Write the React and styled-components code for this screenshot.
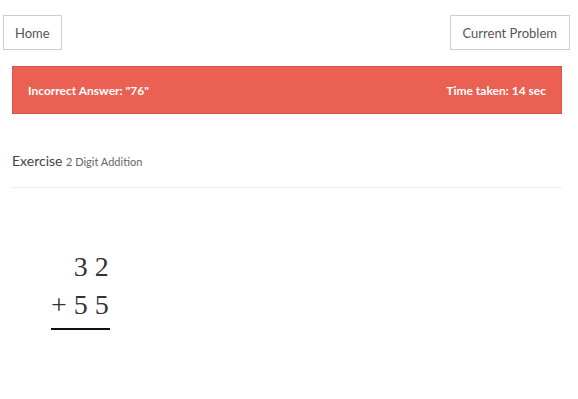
import React from "react";
import styled, { createGlobalStyle } from "styled-components";

const GlobalStyle = createGlobalStyle`
  body {
    margin: 0;
    background: #fff;
    font-family: Lato, "Open Sans", sans-serif;
    color: #555;
  }
`;

const Header = styled.div`
  display: flex;
  justify-content: space-between;
  padding: 15px 8px 0 3px;
`;

const NavButton = styled.button`
  height: 35px;
  padding: 0 ${(p) => (p.wide ? "12px" : "11px")};
  background: #fff;
  border: 1px solid #ccc;
  font-family: Lato, "Open Sans", sans-serif;
  font-size: 13px;
  color: #555;
  cursor: pointer;
`;

const Content = styled.div`
  width: 550px;
  margin-left: 12px;
`;

const Banner = styled.div`
  margin-top: 16px;
  height: 48px;
  box-sizing: border-box;
  display: flex;
  align-items: center;
  justify-content: space-between;
  padding: 0 15px;
  background: #ea6052;
  border: 1px solid #dc5548;
  color: #fff;
  font-size: 12px;
  font-weight: 700;
`;

const Title = styled.div`
  margin-top: 38px;
  padding-bottom: 18px;
  border-bottom: 1px solid #eee;
  font-size: 14px;
  color: #444;
`;

const Sub = styled.span`
  font-size: 11px;
  color: #666;
`;

const Problem = styled.div`
  display: inline-block;
  margin: 60px 0 0 39px;
  font-family: "Liberation Serif", "Times New Roman", serif;
  font-size: 28px;
  color: #333;
  text-align: right;
`;

const Row = styled.div`
  line-height: 38px;
  padding-right: 1px;
  border-bottom: ${(p) => (p.last ? "2px solid #111" : "none")};
  padding-bottom: ${(p) => (p.last ? "4px" : "0")};
`;

export default function App() {
  return (
    <>
      <GlobalStyle />
      <Header>
        <NavButton>Home</NavButton>
        <NavButton wide>Current Problem</NavButton>
      </Header>
      <Content>
        <Banner>
          <span>Incorrect Answer: "76"</span>
          <span>Time taken: 14 sec</span>
        </Banner>
        <Title>
          Exercise <Sub>2 Digit Addition</Sub>
        </Title>
        <Problem>
          <Row>3 2</Row>
          <Row last>+ 5 5</Row>
        </Problem>
      </Content>
    </>
  );
}
